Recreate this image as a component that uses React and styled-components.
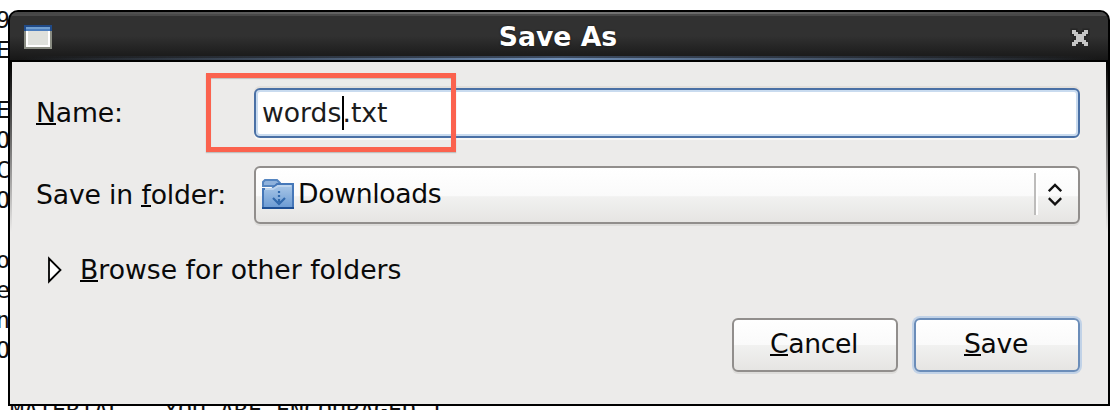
import React from 'react';
import styled, { createGlobalStyle } from 'styled-components';

const Global = createGlobalStyle`
  * { box-sizing: border-box; }
  html, body { margin: 0; background: #fff; }
  body { overflow: hidden; font-family: "DejaVu Sans", sans-serif; }
  button, input { font: inherit; }
`;
const Desktop = styled.main`
  position: relative; width: 1116px; height: 410px; overflow: hidden;
`;
const Terminal = styled.pre`
  margin: 0; padding-top: 5px;
  font: 23.26px/30px "DejaVu Sans Mono", monospace;
  color: #111;
`;
const Line = styled.div`
  height: 30px; white-space: pre;
  margin-left: ${p => p.$x ?? -4}px;
`;
const Dialog = styled.section`
  position: absolute; left: 8px; top: 10px; width: 1102px; height: 396px;
  padding: 2px; background: #000; border-radius: 10px 10px 0 0;
  display: flex; flex-direction: column;
`;
const TitleBar = styled.header`
  height: 50px; flex: none; padding: 2px 18px 0 14px;
  display: flex; align-items: center; justify-content: space-between;
  border-radius: 8px 8px 0 0; border-bottom: 2px solid #000;
  background:
    linear-gradient(90deg, transparent 1%, #7190b8 50%, transparent 99%) 0 46px / 100% 2px no-repeat,
    linear-gradient(90deg, transparent 1%, #3d4c62 50%, transparent 99%) 0 44px / 100% 2px no-repeat,
    linear-gradient(90deg, #444, #777 50%, #444) 0 0 / 100% 2px no-repeat,
    linear-gradient(#484848 0 4px, #313131 4px 24px, #171717 48px);
  > svg:last-child { margin-top: 2px; }
`;
const Title = styled.h1`
  margin: 0 6px 0 0; font: bold 26.67px/30px "DejaVu Sans", sans-serif;
  color: #fff; text-shadow: 0 0 2px #111;
`;
const Body = styled.form`
  flex: 1; margin: 0; padding: 26px 28px 0 24px;
  display: flex; flex-direction: column;
  background:
    linear-gradient(#000, #ecebea 170px) 0 0 / 2px 100% no-repeat,
    linear-gradient(#000, #ecebea 170px) 100% 0 / 2px 100% no-repeat, #ecebea;
  font-size: 26.67px; color: #0a0a0a;
`;
const Field = styled.div`
  display: grid; grid-template-columns: 219px 826px; align-items: center;
  height: ${p => p.$height}px; margin-bottom: ${p => p.$gap}px; margin-left: 1px;
`;
const Label = styled.label`
  line-height: 30px; white-space: nowrap; padding-left: 1px; letter-spacing: -.16px;
`;
const Key = styled.span`
  display: inline-block; height: 27px; line-height: 30px;
  border-bottom: 2px solid #000; vertical-align: top;
`;
const NameInput = styled.div`
  height: 50px; padding: 0 7px 1px 6px; display: flex; align-items: center;
  border: 2px solid #4a70a5; border-radius: 6px; background: #fff;
  box-shadow: inset 0 0 0 2px #c9dbef, 0 2px 0 #f8f7f5, 0 -2px 0 #e2dfdc;
  line-height: 30px; color: #1c1c1c;
`;
const Caret = styled.i`width: 2px; height: 34px; margin: 0 -2px 0 1px; background: #000;`;
const Select = styled.div`
  height: 58px; padding: 0 16px 2px 6px; display: flex; align-items: center;
  border: 2px solid #918e8c; border-radius: 6px;
  background: linear-gradient(#fff, #fafafa 52%, #f1f1f0 53%, #e6e5e3);
  box-shadow: 0 2px 0 #dddcda;
`;
const SelectText = styled.span`flex: 1; margin-left: 4px; line-height: 30px; letter-spacing: -.33px;`;
const Divider = styled.i`
  width: 4px; height: 42px; margin-right: 10px;
  border-left: 2px solid #bdbcbb; border-right: 2px solid #fff;
`;
const Expander = styled.div`
  display: flex; align-items: center; height: 30px; margin-left: 13px; line-height: 30px;
  svg { margin-right: 17px; }
`;
const Actions = styled.footer`
  display: flex; justify-content: flex-end; gap: 16px; margin-top: 33px;
`;
const Button = styled.button`
  width: 166px; height: 54px; padding: 0 2px 2px 0; line-height: 30px; color: #0a0a0a;
  letter-spacing: -.4px;
  border: 2px solid ${p => (p.$primary ? '#6b8db9' : '#918e8c')}; border-radius: 6px;
  background: linear-gradient(#fff, #fafafa 49%, #f1f1f0 50%, #e6e5e3);
  box-shadow: ${p => (p.$primary ? '0 0 0 2px #c1d2e7' : '0 2px 0 #dddcda')};
`;
const Highlight = styled.div`
  position: absolute; left: 206px; top: 73px; width: 250px; height: 79px;
  border: 5px solid #fb624e; box-shadow: 0 1px 1px #9998, inset 0 1px 1px #9998;
`;

const WindowIcon = () => (
  <svg width="28" height="24" shapeRendering="crispEdges">
    <path fill="#898c82" d="M0 0h28v24H0z" /><path fill="#fff" d="M2 6h24v16H2z" />
    <path fill="#dfe1dc" d="M4 6h20v14H4z" /><path fill="#204a87" d="M0 0h28v6H0z" />
    <path fill="#729fcf" d="M2 2h24v2H2z" /><path fill="#4c7fbe" d="M2 4h24v2H2z" />
  </svg>
);
const cross = 'M2 2h4v2h2v2h4V4h2V2h4v4h-2v2h-2v4h2v2h2v4h-4v-2h-2v-2H8v2H6v2H2v-4h2v-2h2V8H4V6H2z';
const CloseIcon = () => (
  <svg width="20" height="20" viewBox="0 0 20 20">
    <path fill="#262626" stroke="#262626" strokeWidth="3" d={cross} />
    <path fill="#c6c6c6" d={cross} />
  </svg>
);
const FolderIcon = () => (
  <svg width="32" height="30" viewBox="0 0 32 30">
    <defs><linearGradient id="folder" x2="0" y2="1"><stop stopColor="#acc9e8" /><stop offset="1" stopColor="#6a9ad3" /></linearGradient></defs>
    <path d="M1 7V3l2-2h12l3 3v3z" fill="#8fb2dc" stroke="#5585c0" strokeWidth="2" />
    <path d="M1 10h9l5-5h16v24H1z" fill="url(#folder)" stroke="#4577b8" strokeWidth="2" />
    <path d="M3 10h8l5-3h13" fill="none" stroke="#bdd4ed" strokeWidth="2" />
    <path d="M17 12v2m0 2v2m0 2v3M11 19l6 6 6-6" fill="none" stroke="#3169ac" strokeWidth="2.2" />
    <path d="M0 29h32" stroke="#1d4f94" strokeWidth="2" />
  </svg>
);
const Arrows = () => (
  <svg width="14" height="26" viewBox="0 0 14 26" fill="none" stroke="#111" strokeWidth="2.4">
    <path d="M.8 10.2L7 4l6.200 6.200M.8 17.200L7 23.400l6.200-6.200" />
  </svg>
);
const Triangle = () => (
  <svg width="16" height="28" viewBox="0 0 16 28"><path d="M2 2.500v23L13.500 14z" fill="#fff" stroke="#000" strokeWidth="1.800" /></svg>
);

const sideText = ['9', 'E', '', 'E', 'O', 'C', 'O', '', 'o', 'e', 'n', 'O', ''];

export default function App() {
  return (
    <Desktop>
      <Global />
      <Terminal>
        {sideText.map((t, i) => <Line key={i}>{t}</Line>)}
        <Line $x={10}>MATERIAL   YOU ARE ENCOURAGED T</Line>
      </Terminal>
      <Dialog>
        <TitleBar><WindowIcon /><Title>Save As</Title><CloseIcon /></TitleBar>
        <Body>
          <Field $height={50} $gap={28}>
            <Label><Key>N</Key>ame:</Label>
            <NameInput><span>words</span><Caret /><span>.txt</span></NameInput>
          </Field>
          <Field $height={58} $gap={31}>
            <Label>Save in <Key>f</Key>older:</Label>
            <Select><FolderIcon /><SelectText>Downloads</SelectText><Divider /><Arrows /></Select>
          </Field>
          <Expander><Triangle /><span><Key>B</Key>rowse for other folders</span></Expander>
          <Actions>
            <Button type="button"><Key>C</Key>ancel</Button>
            <Button type="button" $primary><Key>S</Key>ave</Button>
          </Actions>
        </Body>
      </Dialog>
      <Highlight />
    </Desktop>
  );
}
